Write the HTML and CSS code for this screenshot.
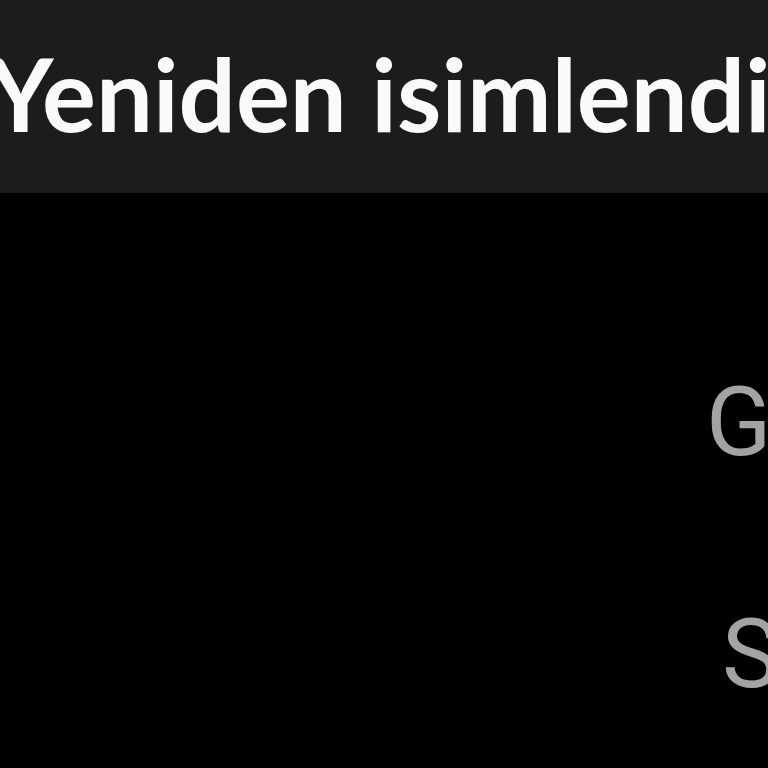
FILE: index.html
```html
<!DOCTYPE html>
<html lang="tr">
<head>
<meta charset="utf-8">
<link rel="stylesheet" href="styles.css">
</head>
<body>
<header class="topbar">
  <h1 class="title">Yeniden isimlendir</h1>
</header>
<main class="menu">
  <div class="item">Göster</div>
  <div class="item item-second">Sil</div>
</main>
</body>
</html>
```
FILE: styles.css
```css
html, body {
  margin: 0;
  padding: 0;
  background: #000;
  width: 768px;
  height: 768px;
  overflow: hidden;
}
.topbar {
  height: 193px;
  box-sizing: border-box;
  padding-bottom: 8px;
  background: #1c1c1c;
  overflow: hidden;
  display: flex;
  align-items: center;
}
.title {
  margin: 0 0 0 -12px;
  font-family: Lato, "Noto Sans", sans-serif;
  font-weight: 700;
  font-size: 101px;
  color: #fafafa;
  white-space: nowrap;
}
.menu {
  padding: 172px 0 0 706px;
  display: flex;
  flex-direction: column;
  gap: 118px;
  overflow: hidden;
  width: 62px;
}
.item {
  font-family: Roboto, "Noto Sans", sans-serif;
  font-size: 96px;
  line-height: 114px;
  color: #a3a3a3;
  white-space: nowrap;
}
.item-second {
  padding-left: 16px;
}
```
